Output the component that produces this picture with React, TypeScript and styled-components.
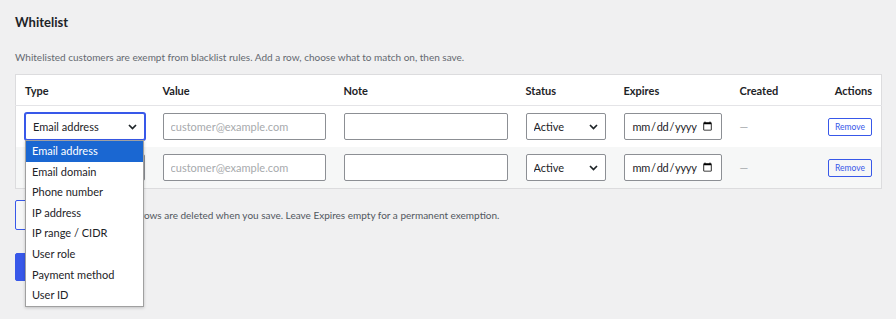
import styled, { createGlobalStyle } from "styled-components";

const GlobalStyle = createGlobalStyle`
  html, body {
    margin: 0;
    padding: 0;
    background: #f0f0f1;
  }
  body {
    font-family: Lato, "Noto Sans", sans-serif;
    font-size: 12px;
    color: #1e1e1e;
  }
`;

const BLUE = "#3858e9";

const Page = styled.div`
  box-sizing: border-box;
  min-height: 319px;
  padding: 12px 14px 0 15px;
  width: 896px;
`;

const Title = styled.h2`
  margin: 0;
  font-size: 13px;
  font-weight: 700;
  line-height: 20px;
  color: #1d2327;
`;

const Description = styled.p`
  margin: 17px 0 9px;
  font-size: 10px;
  line-height: 16px;
  color: #646970;
`;

const Table = styled.table`
  width: 100%;
  border-collapse: collapse;
  table-layout: fixed;
  background: #fff;
  border: 1px solid #dcdcde;
`;

const HeadCell = styled.th<{ $w?: number; $right?: boolean }>`
  box-sizing: border-box;
  width: ${(p) => (p.$w ? `${p.$w}px` : "auto")};
  text-align: ${(p) => (p.$right ? "right" : "left")};
  padding: 0 9px;
  height: 31px;
  font-size: 11px;
  font-weight: 700;
  color: #1d2327;
  border-bottom: 1px solid #e4e4e7;
`;

const Row = styled.tr<{ $alt?: boolean }>`
  background: ${(p) => (p.$alt ? "#f6f7f7" : "#fff")};
`;

const Cell = styled.td<{ $right?: boolean }>`
  padding: 0 9px;
  height: 41px;
  text-align: ${(p) => (p.$right ? "right" : "left")};
  vertical-align: middle;
  position: relative;
`;

const TextInput = styled.input`
  box-sizing: border-box;
  width: 100%;
  height: 27px;
  border: 1px solid #8c8f94;
  border-radius: 2px;
  padding: 0 7px;
  font-family: inherit;
  font-size: 11px;
  color: #1d2327;
  background: #fff;
  &::placeholder {
    color: #a7aaad;
  }
`;

const DateInput = styled(TextInput)`
  padding: 0 6px 0 7px;
  letter-spacing: -0.3px;
`;

const SelectWrap = styled.div`
  position: relative;
  width: 100%;
`;

const NativeSelect = styled.select<{ $focus?: boolean }>`
  appearance: none;
  box-sizing: border-box;
  width: 100%;
  height: 27px;
  padding: 0 24px 0 7px;
  border: 1px solid ${(p) => (p.$focus ? BLUE : "#8c8f94")};
  box-shadow: ${(p) => (p.$focus ? `0 0 0 1px ${BLUE}` : "none")};
  border-radius: 2px;
  background: #fff;
  font-family: inherit;
  font-size: 11px;
  color: #1d2327;
  outline: none;
`;

const Chevron = styled.svg`
  position: absolute;
  right: 8px;
  top: 11px;
  pointer-events: none;
`;

const Dash = styled.span`
  color: #a7aaad;
  font-size: 11px;
`;

const SmallButton = styled.button`
  height: 18px;
  padding: 0 6px;
  border: 1px solid ${BLUE};
  border-radius: 2px;
  background: transparent;
  color: ${BLUE};
  font-family: inherit;
  font-size: 8.5px;
  line-height: 16px;
`;

const Footer = styled.div`
  display: flex;
  align-items: center;
  gap: 8px;
  margin-top: 11px;
`;

const SecondaryButton = styled.button`
  height: 30px;
  padding: 0 22px;
  border: 1px solid ${BLUE};
  border-radius: 2px;
  background: #f6f7f7;
  color: ${BLUE};
  font-family: inherit;
  font-size: 11px;
`;

const Note = styled.span`
  font-size: 10px;
  color: #50575e;
`;

const PrimaryButton = styled.button`
  margin-top: 23px;
  height: 28px;
  padding: 0 14px;
  border: 1px solid ${BLUE};
  border-radius: 2px;
  background: ${BLUE};
  color: #fff;
  font-family: inherit;
  font-size: 11px;
`;

const ListBox = styled.ul`
  position: absolute;
  left: 9px;
  top: 34px;
  z-index: 5;
  box-sizing: border-box;
  width: 119px;
  margin: 0;
  padding: 0;
  list-style: none;
  background: #fff;
  border: 1px solid #a0a0a0;
  box-shadow: 0 1px 3px rgba(0, 0, 0, 0.2);
`;

const Option = styled.li<{ $active?: boolean }>`
  height: 20.6px;
  line-height: 20px;
  padding: 0 6px;
  font-size: 11px;
  color: ${(p) => (p.$active ? "#fff" : "#1d2327")};
  background: ${(p) => (p.$active ? "#1a67d2" : "transparent")};
  white-space: nowrap;
`;

const typeOptions = [
  "Email address",
  "Email domain",
  "Phone number",
  "IP address",
  "IP range / CIDR",
  "User role",
  "Payment method",
  "User ID",
];

function Select({ value, options, focus }: { value: string; options: string[]; focus?: boolean }) {
  return (
    <SelectWrap>
      <NativeSelect $focus={focus} defaultValue={value}>
        {options.map((o) => (
          <option key={o}>{o}</option>
        ))}
      </NativeSelect>
      <Chevron width="9" height="6" viewBox="0 0 9 6">
        <path d="M1 1l3.5 3.5L8 1" fill="none" stroke="#1d2327" strokeWidth="1.7" />
      </Chevron>
    </SelectWrap>
  );
}

function EntryRow({ alt, open }: { alt?: boolean; open?: boolean }) {
  return (
    <Row $alt={alt}>
      <Cell>
        <Select value="Email address" options={typeOptions} focus={open} />
        {open && (
          <ListBox>
            {typeOptions.map((o, i) => (
              <Option key={o} $active={i === 0}>
                {o}
              </Option>
            ))}
          </ListBox>
        )}
      </Cell>
      <Cell>
        <TextInput placeholder="customer@example.com" />
      </Cell>
      <Cell>
        <TextInput />
      </Cell>
      <Cell>
        <Select value="Active" options={["Active", "Inactive"]} />
      </Cell>
      <Cell>
        <DateInput type="date" />
      </Cell>
      <Cell>
        <Dash>—</Dash>
      </Cell>
      <Cell $right>
        <SmallButton>Remove</SmallButton>
      </Cell>
    </Row>
  );
}

export default function App() {
  return (
    <>
      <GlobalStyle />
      <Page>
        <Title>Whitelist</Title>
        <Description>
          Whitelisted customers are exempt from blacklist rules. Add a row, choose what to match on, then save.
        </Description>
        <Table>
          <thead>
            <tr>
              <HeadCell $w={138}>Type</HeadCell>
              <HeadCell $w={181}>Value</HeadCell>
              <HeadCell $w={182}>Note</HeadCell>
              <HeadCell $w={98}>Status</HeadCell>
              <HeadCell $w={116}>Expires</HeadCell>
              <HeadCell $w={80}>Created</HeadCell>
              <HeadCell $right>Actions</HeadCell>
            </tr>
          </thead>
          <tbody>
            <EntryRow open />
            <EntryRow alt />
          </tbody>
        </Table>
        <Footer>
          <SecondaryButton>Add row</SecondaryButton>
          <Note>Empty rows are deleted when you save. Leave Expires empty for a permanent exemption.</Note>
        </Footer>
        <PrimaryButton>Save whitelist</PrimaryButton>
      </Page>
    </>
  );
}
